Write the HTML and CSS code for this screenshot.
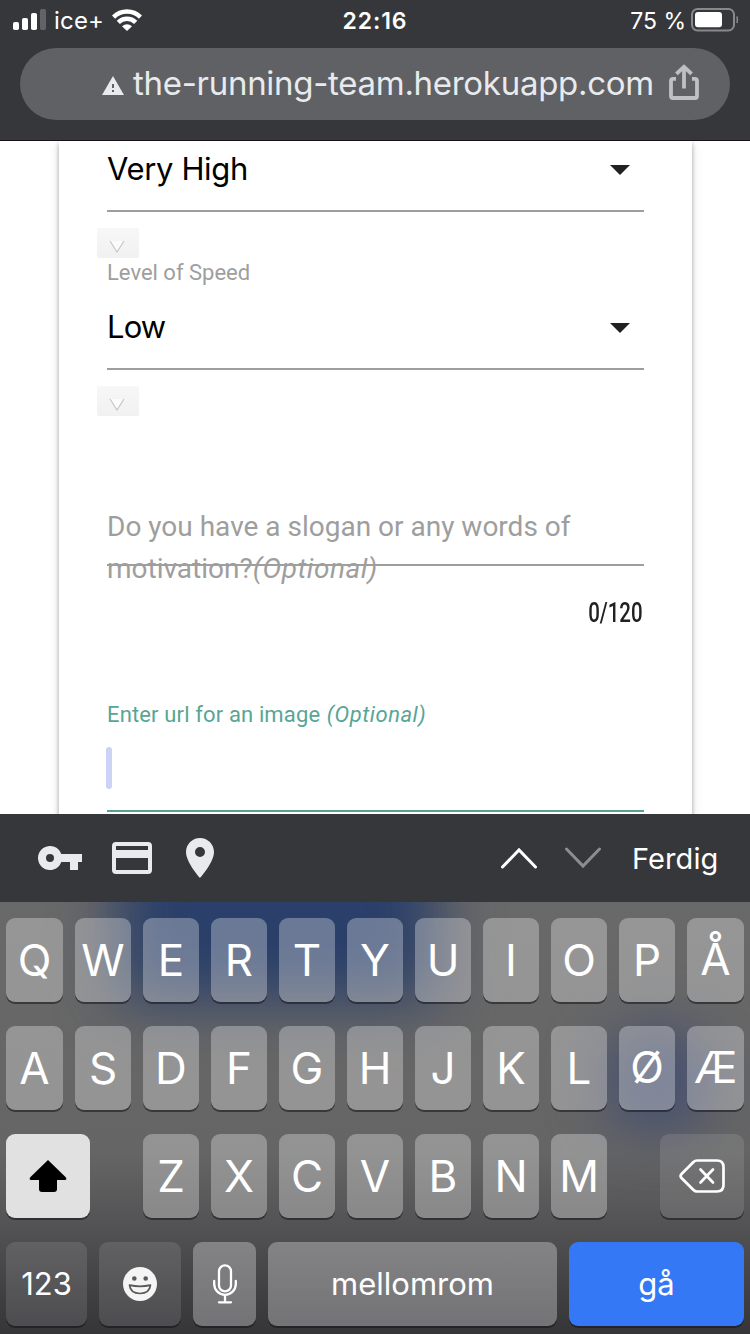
FILE: index.html
```
<!DOCTYPE html>
<html lang="no">
<head>
<meta charset="utf-8">
<title>The Running Team</title>
<link rel="stylesheet" href="styles.css">
</head>
<body>
<div class="phone">
  <header class="browser-bar">
    <div class="status">
      <div class="status-left">
        <svg class="signal" width="34" height="22" viewBox="0 0 34 22"><g fill="#fff"><rect x="0" y="13" width="6" height="8" rx="1.8"/><rect x="9" y="9" width="6" height="12" rx="1.8"/><rect x="18" y="4" width="6" height="17" rx="1.8"/></g><rect x="27" y="0" width="6" height="21" rx="1.8" fill="#626366"/></svg>
        <span class="carrier">ice+</span>
        <svg class="wifi" width="30" height="22" viewBox="0 0 30 22"><g fill="none" stroke="#fff" stroke-width="4.5"><path d="M1.5 8.1 A19 19 0 0 1 28.5 8.1"/><path d="M6.3 13.3 A12.2 12.2 0 0 1 23.7 13.3"/></g><path d="M10 17.2 Q15 13.4 20 17.2 L15 22Z" fill="#fff"/></svg>
      </div>
      <span class="clock">22:16</span>
      <div class="status-right">
        <span class="percent">75 %</span>
        <svg width="49" height="24" viewBox="0 0 49 24"><rect x="1" y="1" width="42" height="21.5" rx="5.5" fill="none" stroke="#88898c" stroke-width="2"/><rect x="4" y="4" width="27" height="15.3" rx="3" fill="#fff"/><path d="M46 8.5 Q47.5 11.8 46 15Z" fill="#88898c" stroke="#88898c"/></svg>
      </div>
    </div>
    <div class="address">
      <svg class="warn" width="22" height="20" viewBox="0 0 22 20"><path d="M11 0 L22 19 H0Z" fill="#e8eaed"/><path d="M10 8h2v4h-2zM10 14h2v2h-2z" fill="#5f6368"/></svg>
      <span class="url">the-running-team.herokuapp.com</span>
      <svg class="share" width="30" height="36" viewBox="0 0 30 36"><g fill="none" stroke="#bdc1c6" stroke-width="3.8"><path d="M7 14.9 H4 Q2 14.9 2 17 V32 Q2 34 4 34 H26 Q28 34 28 32 V17 Q28 14.9 26 14.9 H23"/><path d="M15 24.5 V3"/><path d="M7.4 9.8 L15 2.8 L22.6 9.8"/></g></svg>
    </div>
  </header>

  <main class="page">
    <form class="card">
      <div class="select first"><span>Very High</span><i class="caret"></i></div>
      <div class="native"><svg width="42" height="30" viewBox="0 0 42 30"><path d="M13 13 L20 24 L27 13" fill="#fbfbfb" stroke="#c3c3c3" stroke-width="1.1"/></svg></div>
      <label class="small-label">Level of Speed</label>
      <div class="select second"><span>Low</span><i class="caret"></i></div>
      <div class="native"><svg width="42" height="30" viewBox="0 0 42 30"><path d="M13 13 L20 24 L27 13" fill="#fbfbfb" stroke="#c3c3c3" stroke-width="1.1"/></svg></div>
      <div class="slogan">
        <label>Do you have a slogan or any words of<br>motivation?<em>(Optional)</em></label>
        <div class="rule"></div>
      </div>
      <div class="counter"><span>0/120</span></div>
      <div class="image-field">
        <label>Enter url for an image <em>(Optional)</em></label>
        <div class="cursor"></div>
      </div>
    </form>
  </main>

  <div class="assist">
    <svg class="key-icon" width="44" height="25" viewBox="0 0 44 25"><path fill-rule="evenodd" fill="#e8eaed" d="M23.3 8 A12 12 0 1 0 23.3 16 H32 V24 H40 V16 H44 V8Z M12 8a4 4 0 1 1 0 8a4 4 0 0 1 0-8Z"/></svg>
    <svg class="card-icon" width="40" height="32" viewBox="0 0 40 32"><path fill-rule="evenodd" fill="#e8eaed" d="M4 0H36Q40 0 40 4V28Q40 32 36 32H4Q0 32 0 28V4Q0 0 4 0ZM4 4V8H36V4ZM4 16V28H36V16Z"/></svg>
    <svg class="pin-icon" width="28" height="40" viewBox="0 0 28 40"><path fill-rule="evenodd" fill="#e8eaed" d="M14 0C6.26 0 0 6.26 0 14C0 24.5 14 40 14 40S28 24.5 28 14C28 6.26 21.74 0 14 0ZM14 19a5 5 0 1 1 0-10a5 5 0 0 1 0 10Z"/></svg>
    <svg class="up" width="36" height="22" viewBox="0 0 36 22"><path d="M1.5 20 L18 3 L34.5 20" fill="none" stroke="#fff" stroke-width="3" stroke-linecap="round"/></svg>
    <svg class="down" width="36" height="22" viewBox="0 0 36 22"><path d="M1.5 2 L18 19 L34.5 2" fill="none" stroke="#8c8d90" stroke-width="3" stroke-linecap="round"/></svg>
    <span class="done">Ferdig</span>
  </div>

  <div class="keyboard">
    <div class="row letters"><b>Q</b><b>W</b><b>E</b><b>R</b><b>T</b><b>Y</b><b>U</b><b>I</b><b>O</b><b>P</b><b class="raised">Å</b></div>
    <div class="row letters"><b>A</b><b>S</b><b>D</b><b>F</b><b>G</b><b>H</b><b>J</b><b>K</b><b>L</b><b class="raised">Ø</b><b class="raised">Æ</b></div>
    <div class="row third">
      <b class="shift"><svg width="38" height="34" viewBox="0 0 38 34"><path d="M19 1 L37 18.5 Q38 21 36 21 H28 V30 Q28 33 25 33 H13 Q10 33 10 30 V21 H2 Q0 21 1 18.5Z" fill="#000"/></svg></b>
      <div class="middle"><b>Z</b><b>X</b><b>C</b><b>V</b><b>B</b><b>N</b><b>M</b></div>
      <b class="dark"><svg width="46" height="34" viewBox="0 0 46 34"><g fill="none" stroke="#fff" stroke-width="2.7" stroke-linecap="round" stroke-linejoin="round"><path d="M18 1.5 H38 Q44.5 1.5 44.5 8 V26 Q44.5 32.5 38 32.5 H18 Q16 32.5 14.5 31 L2.5 19 Q.7 17 2.5 15 L14.5 3 Q16 1.5 18 1.5Z"/><path d="M21.5 10.5 L34 23.5 M34 10.5 L21.5 23.5"/></g></svg></b>
    </div>
    <div class="row bottom">
      <b class="dark num">123</b>
      <b class="dark"><svg width="34" height="34" viewBox="0 0 34 34"><circle cx="17" cy="17" r="17" fill="#f4f4f4"/><g fill="#58585a"><circle cx="11.3" cy="11.5" r="2.3"/><circle cx="22.7" cy="11.5" r="2.3"/></g><path d="M6.5 18.2 Q17 20.5 27.5 18.2 Q26.5 26.5 17 26.5 Q7.5 26.5 6.5 18.2Z" fill="none" stroke="#58585a" stroke-width="1.7" stroke-linejoin="round"/></svg></b>
      <b><svg width="24" height="40" viewBox="0 0 24 40"><g fill="none" stroke="#fff" stroke-width="2.3" stroke-linecap="round"><rect x="6" y="1.4" width="12" height="26" rx="6"/><path d="M1.2 17 V20 A10.8 10.8 0 0 0 22.8 20 V17 M12 31 V38 M6 38.3 H18"/></g></svg></b>
      <b class="space">mellomrom</b>
      <b class="go">gå</b>
    </div>
  </div>
</div>
</body>
</html>
```
FILE: styles.css
```
* { box-sizing: border-box; }
body { margin: 0; background: #fff; }
svg { display: block; flex: none; }
.phone {
  width: 750px; height: 1334px; overflow: hidden;
  display: flex; flex-direction: column;
  font-family: Inter, "Liberation Sans", sans-serif;
}
.browser-bar {
  height: 141px; flex: none; padding: 0 20px;
  background: #36373b; border-bottom: 1px solid #1a1118;
}
.status {
  height: 48px; display: grid; grid-template-columns: 1fr auto 1fr;
  margin: 0 -10px 0 -7px; padding-top: 8px; color: #fff; line-height: 26px;
}
.status-left { display: flex; align-items: flex-start; }
.signal { margin-top: 1px; }
.carrier { font-size: 24px; margin-left: 7px; width: 58px; letter-spacing: .2px; white-space: nowrap; }
.wifi { margin-top: 1px; }
.clock { font-size: 23px; font-weight: 600; letter-spacing: .9px; margin-left: -3px; }
.status-right { display: flex; justify-content: flex-end; }
.percent { font-size: 23px; margin-right: 5px; white-space: nowrap; }
.address {
  height: 72px; border-radius: 36px; background: #5f6165;
  display: flex; align-items: center; padding-left: 82px;
}
.warn { margin-top: 3px; }
.url { width: 522px; margin-left: 9px; font-size: 33px; line-height: 40px; color: #e8eaed; white-space: nowrap; margin-top: -3px; font-weight: 370; letter-spacing: -.29px; }
.share { margin-left: 14px; margin-top: -4px; }

.page { height: 673px; flex: none; overflow: hidden; padding: 0 58px 0 59px; background: #fff; }
.card { height: 700px; padding: 0 48px; background: #fff; box-shadow: 0 4px 5px rgba(0,0,0,.14), 0 1px 10px rgba(0,0,0,.12), 0 2px 4px rgba(0,0,0,.16); }
.select {
  display: flex; align-items: center; justify-content: space-between;
  padding-right: 14px; border-bottom: 2px solid #9e9e9e; color: #000;
  font-size: 31px; line-height: 40px; letter-spacing: -.35px;
}
.select span { padding-bottom: 2px; }
.second span { letter-spacing: -.9px; }
.first { height: 71px; padding-bottom: 12px; }
.second { height: 83px; }
.caret { width: 0; height: 0; border: 10px solid transparent; border-top-color: #212121; border-bottom: 0; }
.native { width: 42px; height: 30px; margin: 16px 0 0 -10px; border-radius: 2px; background: linear-gradient(#f7f7f7, #f1f1f1); }
.small-label {
  display: block; height: 29px; line-height: 30px;
  font-family: Roboto, sans-serif; font-size: 22px; color: #9e9e9e; white-space: nowrap;
}
.slogan {
  height: 86px; margin-top: 90px; position: relative;
  font: 28px/42px Roboto, sans-serif; color: #9e9e9e; white-space: nowrap;
}
em { letter-spacing: .5px; }
.rule { position: absolute; left: 0; right: 0; top: 58px; height: 2px; background: #9e9e9e; }
.counter { height: 42px; padding-right: 1px; display: flex; justify-content: flex-end; font: 500 28px/42px Roboto, sans-serif; color: #212121; }
.counter span { transform: scaleX(.73); transform-origin: right; }
.image-field {
  height: 113px; margin-top: 65px; border-bottom: 2px solid #58a091;
  font: 22px/32px Roboto, sans-serif; color: #58a595; white-space: nowrap;
}
.image-field label { display: block; letter-spacing: .14px; }
.image-field em { letter-spacing: .5px; margin-left: 1px; }
.cursor { width: 6px; height: 42px; margin: 16px 0 0 -1px; border-radius: 3px; background: #ccd3f6; }

.assist { height: 88px; flex: none; padding: 0 32px 0 38px; display: flex; align-items: center; background: #36373b; }
.card-icon { margin-left: 30px; }
.pin-icon { margin-left: 34px; }
.up { margin-left: 287px; }
.down { margin-left: 28px; }
.done { margin-left: 31px; color: #fff; font-size: 29px; white-space: nowrap; letter-spacing: .1px; }

.keyboard {
  height: 432px; flex: none; padding: 16px 6px 8px;
  display: flex; flex-direction: column; gap: 24px;
  position: relative; z-index: 0; overflow: hidden;
  background: linear-gradient(#696969 0, #656565 58%, #555557 73%, #3b3b3e 95%, #363639);
}
.keyboard::before, .keyboard::after {
  content: ""; position: absolute; z-index: -1;
}
.keyboard::before {
  left: 118px; top: -100px; width: 318px; height: 198px;
  background: #2a3f69; filter: blur(31px);
}
.keyboard::after {
  left: 605px; top: 125px; width: 105px; height: 105px; border-radius: 45px;
  background: #465070; filter: blur(28px);
}
.row { height: 84px; display: grid; column-gap: 12px; }
.letters { grid-template-columns: 57px repeat(9, 56px) 57px; }
.third { grid-template-columns: 84px 464px 84px; column-gap: 53px; }
.middle { display: grid; grid-template-columns: repeat(7, 56px); gap: 12px; }
.bottom { grid-template-columns: 81px 82px 63px 289px 175px; }
b {
  display: flex; align-items: center; justify-content: center;
  border-radius: 9px; background: rgba(255,255,255,.3); color: #fff;
  box-shadow: 0 2px 0 rgba(20,20,24,.55);
  font-size: 44px; line-height: 50px; font-weight: 380;
}
.letters .raised { padding-bottom: 2px; }
.bottom b { font-size: 31px; }
.third .shift { background: #e1e1e1; }
.row .dark { background: rgba(255,255,255,.11); }
.bottom .go { background: #3478f6; }
```
